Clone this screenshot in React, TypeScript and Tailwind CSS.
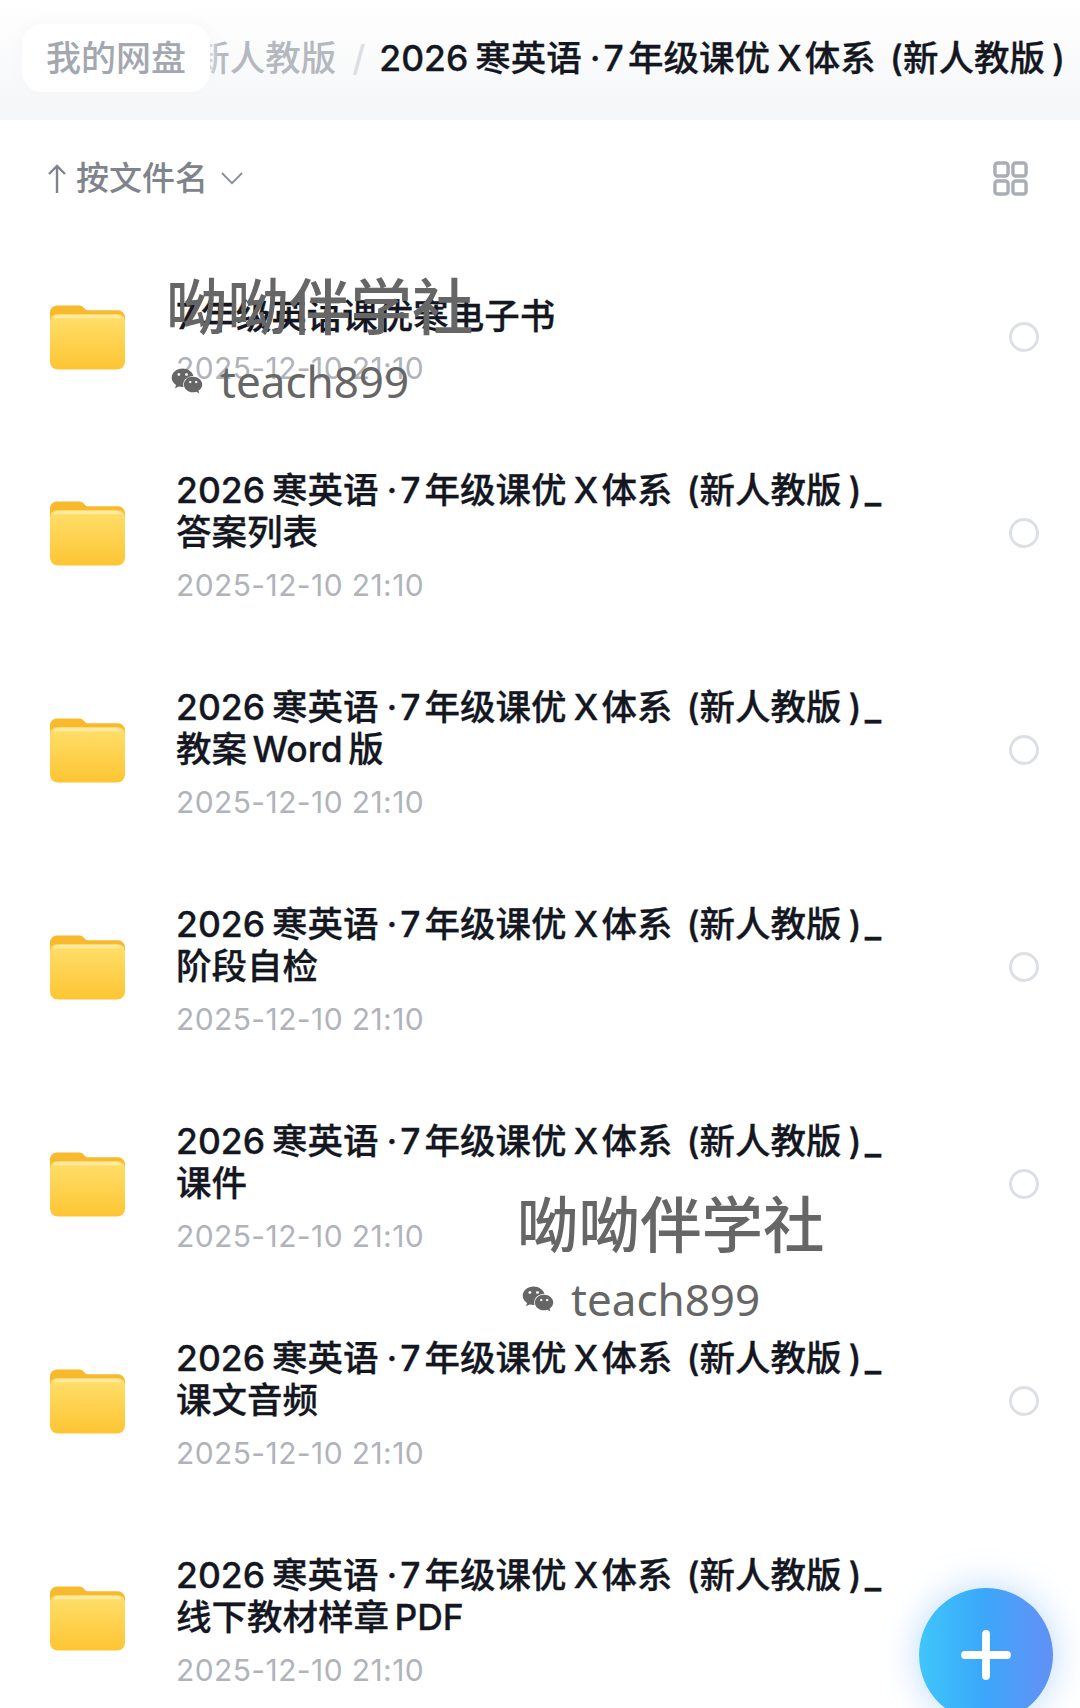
import { Plus } from "lucide-react";
import { FaWeixin } from "react-icons/fa";

const CourseTitle = () => (
  <>
    2026
    <span className="ml-[7px]">寒英语</span>
    <span className="ml-[8px]">·</span>
    <span className="ml-[3px]">7</span>
    <span className="ml-[4px]">年级课优</span>
    <span className="ml-[7px]">X</span>
    <span className="ml-[3px]">体系</span>
    <span className="ml-[14px]">(</span>
    新人教版
    <span className="ml-[7px]">)</span>
  </>
);

const folders = [
  { second: "答案列表" },
  { second: "教案 Word 版" },
  { second: "阶段自检" },
  { second: "课件" },
  { second: "课文音频" },
  { second: "线下教材样章 PDF" },
];

const FolderIcon = () => (
  <svg viewBox="0 0 76 66" className="h-[66px] w-[75px] shrink-0">
    <defs>
      <linearGradient id="folderFront" x1="0" y1="0" x2="0" y2="1">
        <stop offset="0" stopColor="#ffdf6b" />
        <stop offset="1" stopColor="#fdc533" />
      </linearGradient>
    </defs>
    <path d="M0 8a7 7 0 0 1 7-7h23c4 0 5 5 9 5h30a7 7 0 0 1 7 7v20H0z" fill="#f9b92c" />
    <path d="M0 17a7 7 0 0 1 7-7h62a7 7 0 0 1 7 7v41a8 8 0 0 1-8 8H8a8 8 0 0 1-8-8z" fill="url(#folderFront)" />
    <path d="M9 10.5h58a7 7 0 0 1 6 3.5H3a7 7 0 0 1 6-3.5z" fill="#ffeaa0" />
  </svg>
);

const GridIcon = () => (
  <svg viewBox="0 0 36 36" className="h-[35px] w-[35px]" fill="none" stroke="#a9adb4" strokeWidth="3.5">
    <rect x="2" y="2" width="13.5" height="13.5" rx="3" />
    <rect x="20.5" y="2" width="13.5" height="13.5" rx="3" />
    <rect x="2" y="20.5" width="13.5" height="13.5" rx="3" />
    <rect x="20.5" y="20.5" width="13.5" height="13.5" rx="3" />
  </svg>
);

const Watermark = ({ className }: { className: string }) => (
  <div className={"pointer-events-none absolute text-[#666666] " + className}>
    <div className="text-[61.5px] font-medium leading-[70px] whitespace-nowrap">呦呦伴学社</div>
    <div className="mt-[10px] ml-[5px] flex items-center">
      <FaWeixin className="h-8 w-8" />
      <span className="ml-[17px] text-[44px] leading-[56px]" style={{ fontFamily: '"Noto Sans", sans-serif' }}>
        teach899
      </span>
    </div>
  </div>
);

export default function App() {
  return (
    <div
      className="relative h-[1708px] w-[1080px] overflow-hidden bg-gradient-to-b from-white to-[#f5f6f8] bg-[length:100%_120px] bg-no-repeat"
      style={{ fontFamily: '"Inter", "Noto Sans CJK SC", sans-serif' }}
    >
      {/* Breadcrumb */}
      <div className="flex h-[120px] items-start justify-end overflow-hidden pr-[15px] pt-[33px] text-[35.5px] leading-[52px] whitespace-nowrap">
        <span className="font-medium text-[#b4b8bf]">新人教版</span>
        <span className="ml-[16px] mr-[14px] font-medium text-[#dcdee2]">/</span>
        <span className="font-medium text-[#14171f] [-webkit-text-stroke:0.3px]">
          <CourseTitle />
        </span>
      </div>
      <div className="absolute left-[22px] top-[24px] flex h-[68px] w-[188px] items-center justify-center rounded-[20px] bg-white text-[35px] font-medium text-[#a3a7af] shadow-[0_0_16px_rgba(245,246,248,1)]">
        我的网盘
      </div>

      {/* File list */}
      <div className="h-[1588px] rounded-t-[40px] bg-white">
        <div className="flex h-[116px] items-center justify-between pl-[47px] pr-[52px] pt-[1px] text-[#7f848c]">
          <div className="flex items-center">
            <svg viewBox="0 0 20 30" className="h-[30px] w-[20px]" fill="none" stroke="#7f848c" strokeWidth="2.4">
              <path d="M10 2v27M2 10l8-8 8 8" />
            </svg>
            <span className="ml-[9px] text-[33px] font-medium">按文件名</span>
            <svg viewBox="0 0 24 14" className="ml-[13px] h-[13px] w-[22px]" fill="none" stroke="#8a8e95" strokeWidth="2">
              <path d="M1 1l11 11L23 1" />
            </svg>
          </div>
          <GridIcon />
        </div>
        <div className="pt-[13px]">
          <div className="flex h-[175px] items-center pl-[50px] pr-[41px]">
            <FolderIcon />
            <div className="ml-[51px] flex-1 whitespace-nowrap pt-[11px] text-[35.5px] font-medium leading-[42px] text-[#14171f] [-webkit-text-stroke:0.3px]">
              <div>
                7<span className="ml-[4px]">年级英语课优寒电子书</span>
              </div>
              <div className="mt-[10px] text-[30px] font-normal leading-[40px] tracking-[0.4px] text-[#b0b4ba] [-webkit-text-stroke:0px]">2025-12-10 21:10</div>
            </div>
            <div className="h-[30px] w-[30px] rounded-full border-[3px] border-[#dcdfe3]" />
          </div>
          {folders.map((folder) => (
            <div key={folder.second} className="flex h-[217px] items-center pl-[50px] pr-[41px]">
              <FolderIcon />
              <div className="ml-[51px] flex-1 whitespace-nowrap pt-[10px] text-[35.5px] font-medium leading-[42px] text-[#14171f] [-webkit-text-stroke:0.3px]">
                <div>
                  <CourseTitle />
                  <span className="ml-[3px]">_</span>
                </div>
                <div className="[word-spacing:-4px]">{folder.second}</div>
                <div className="mt-[11px] text-[30px] font-normal leading-[40px] tracking-[0.4px] text-[#b0b4ba] [-webkit-text-stroke:0px]">2025-12-10 21:10</div>
              </div>
              <div className="h-[30px] w-[30px] rounded-full border-[3px] border-[#dcdfe3]" />
            </div>
          ))}
        </div>
      </div>

      <Watermark className="left-[166px] top-[273px]" />
      <Watermark className="left-[517px] top-[1191px]" />

      {/* Add button */}
      <div className="absolute left-[919px] top-[1588px] flex h-[134px] w-[134px] items-center justify-center rounded-full bg-gradient-to-r from-[#3fc6fb] via-[#3ba6fa] to-[#6190f5] shadow-[0_0_36px_rgba(80,160,250,0.4)]">
        <Plus className="h-[72px] w-[72px] text-white" strokeWidth={2.6} />
      </div>
    </div>
  );
}
